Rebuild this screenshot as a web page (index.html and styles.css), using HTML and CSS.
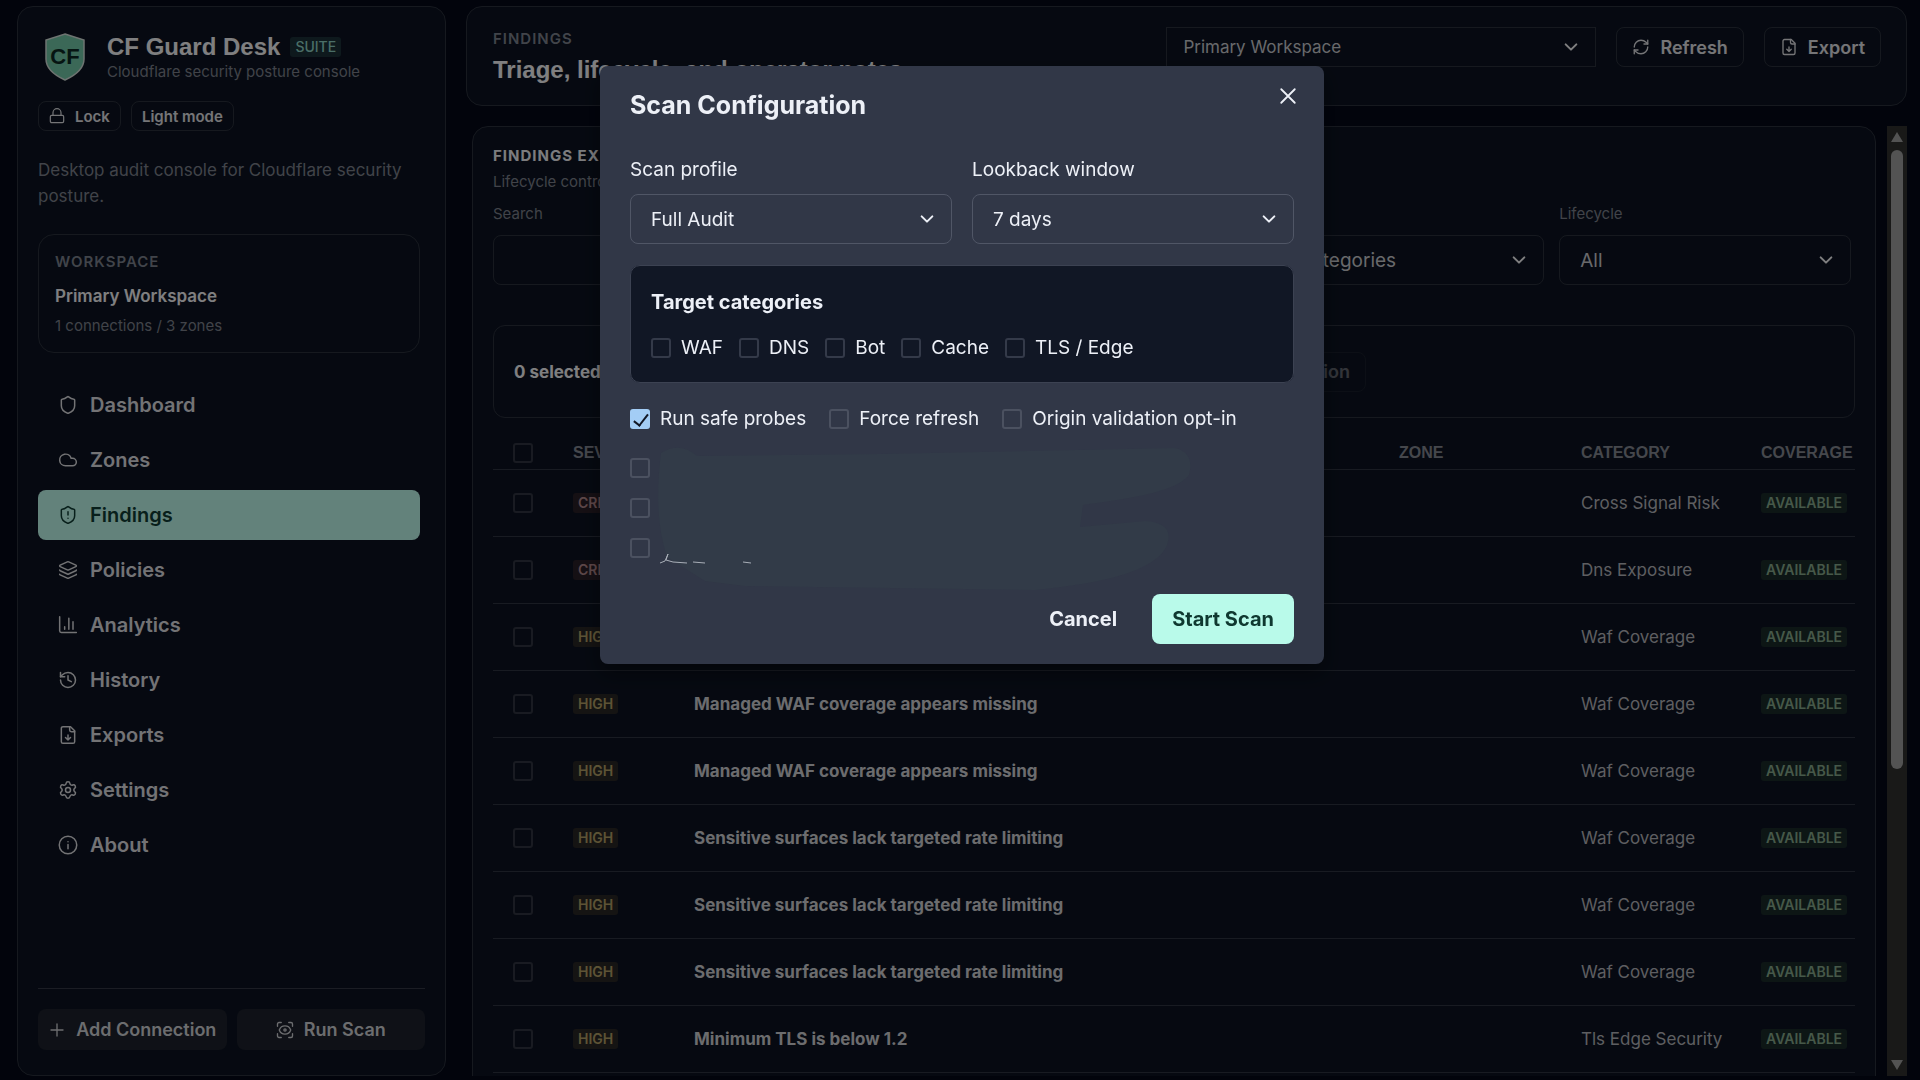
FILE: index.html
```html
<!DOCTYPE html>
<html lang="en">

<head>
    <meta charset="UTF-8">
    <meta name="viewport" content="width=device-width, initial-scale=1.0">
    <title>CF Guard Desk</title>
    <link rel="stylesheet" href="styles.css">
</head>

<body>
    <!-- icon sprite -->
    <svg class="sprite" aria-hidden="true">
        <symbol id="i-shield" viewBox="0 0 24 24"><path d="M20 13c0 5-3.500 7.500-7.660 8.950a1 1 0 0 1-.67-.01C7.500 20.500 4 18 4 13V6a1 1 0 0 1 1-1c2 0 4.500-1.200 6.240-2.720a1.170 1.170 0 0 1 1.520 0C14.510 3.810 17 5 19 5a1 1 0 0 1 1 1z"/></symbol>
        <symbol id="i-cloud" viewBox="0 0 24 24"><path d="M17.500 19H9a7 7 0 1 1 6.710-9h1.790a4.500 4.500 0 1 1 0 9z"/></symbol>
        <symbol id="i-alert" viewBox="0 0 24 24"><path d="M20 13c0 5-3.500 7.500-7.660 8.950a1 1 0 0 1-.67-.01C7.500 20.500 4 18 4 13V6a1 1 0 0 1 1-1c2 0 4.500-1.200 6.240-2.720a1.170 1.170 0 0 1 1.520 0C14.510 3.810 17 5 19 5a1 1 0 0 1 1 1z"/><path d="M12 8v4M12 16h.01"/></symbol>
        <symbol id="i-layers" viewBox="0 0 24 24"><path d="M12.830 2.180a2 2 0 0 0-1.660 0L2.600 6.080a1 1 0 0 0 0 1.830l8.580 3.910a2 2 0 0 0 1.660 0l8.580-3.900a1 1 0 0 0 0-1.830z"/><path d="M2 12a1 1 0 0 0 .58.91l8.600 3.910a2 2 0 0 0 1.650 0l8.580-3.900A1 1 0 0 0 22 12"/><path d="M2 17a1 1 0 0 0 .58.91l8.600 3.910a2 2 0 0 0 1.650 0l8.580-3.900A1 1 0 0 0 22 17"/></symbol>
        <symbol id="i-chart" viewBox="0 0 24 24"><path d="M2 2v17a2 2 0 0 0 2 2h18M18 17V8M13 17V4M8 17v-3"/></symbol>
        <symbol id="i-history" viewBox="0 0 24 24"><path d="M3 12a9 9 0 1 0 9-9 9.750 9.750 0 0 0-6.740 2.740L3 8"/><path d="M3 3v5h5M12 7v5l4 2"/></symbol>
        <symbol id="i-file" viewBox="0 0 24 24"><path d="M15 2H6a2 2 0 0 0-2 2v16a2 2 0 0 0 2 2h12a2 2 0 0 0 2-2V7z"/><path d="M14 2v4a2 2 0 0 0 2 2h4M12 18v-6M9 15l3 3 3-3"/></symbol>
        <symbol id="i-gear" viewBox="0 0 24 24"><path d="M9.671 4.136a2.340 2.340 0 0 1 4.659 0 2.340 2.340 0 0 0 3.319 1.915 2.340 2.340 0 0 1 2.330 4.033 2.340 2.340 0 0 0 0 3.831 2.340 2.340 0 0 1-2.330 4.033 2.340 2.340 0 0 0-3.319 1.915 2.340 2.340 0 0 1-4.659 0 2.340 2.340 0 0 0-3.320-1.915 2.340 2.340 0 0 1-2.330-4.033 2.340 2.340 0 0 0 0-3.831A2.340 2.340 0 0 1 6.350 6.051a2.340 2.340 0 0 0 3.319-1.915"/><circle cx="12" cy="12" r="3"/></symbol>
        <symbol id="i-info" viewBox="0 0 24 24"><circle cx="12" cy="12" r="10.500"/><path d="M12 16.500v-5M12 8h.01"/></symbol>
        <symbol id="i-plus" viewBox="0 0 24 24"><path d="M4 12h16M12 4v16"/></symbol>
        <symbol id="i-scan" viewBox="0 0 24 24"><path d="M2 7V4a2 2 0 0 1 2-2h3M17 2h3a2 2 0 0 1 2 2v3M22 17v3a2 2 0 0 1-2 2h-3M7 22H4a2 2 0 0 1-2-2v-3"/><circle cx="12" cy="12" r="1.500"/><path d="M19.500 12.330a1 1 0 0 0 0-.66 8 8 0 0 0-15 0 1 1 0 0 0 0 .66 8 8 0 0 0 15 0"/></symbol>
        <symbol id="i-refresh" viewBox="0 0 24 24"><path d="M3 12a9 9 0 0 1 9-9 9.750 9.750 0 0 1 6.740 2.740L21 8"/><path d="M21 3v5h-5M21 12a9 9 0 0 1-9 9 9.750 9.750 0 0 1-6.740-2.740L3 16"/><path d="M8 16H3v5"/></symbol>
        <symbol id="i-lock" viewBox="0 0 24 24"><rect x="2" y="11" width="20" height="11" rx="2"/><path d="M6 11V7a6 6 0 0 1 12 0v4"/></symbol>
        <symbol id="i-down" viewBox="0 0 24 24"><path d="M4 8l8 8 8-8"/></symbol>
        <symbol id="i-x" viewBox="0 0 24 24"><path d="M3 3l18 18M21 3L3 21"/></symbol>
    </svg>

    <div class="app">
        <aside class="sidebar">
            <div class="brand">
                <svg class="logo" viewBox="0 0 48 52" aria-hidden="true">
                    <path class="logo-shape" d="M24 3l19 6v19c0 9-8 16-19 21C13 44 5 37 5 28V9z"/>
                    <text x="24" y="33" text-anchor="middle">CF</text>
                </svg>
                <div>
                    <div class="brand-name">
                        <h1>CF Guard Desk</h1>
                        <span class="badge suite">SUITE</span>
                    </div>
                    <p class="small muted">Cloudflare security posture console</p>
                </div>
            </div>

            <div class="quick">
                <button class="btn tiny"><svg class="icon"><use href="#i-lock"/></svg>Lock</button>
                <button class="btn tiny">Light mode</button>
            </div>

            <p class="about muted">Desktop audit console for Cloudflare security posture.</p>

            <div class="workspace">
                <p class="eyebrow">WORKSPACE</p>
                <p class="workspace-name">Primary Workspace</p>
                <p class="small muted">1 connections / 3 zones</p>
            </div>

            <nav>
                <a href="#dashboard"><svg class="icon"><use href="#i-shield"/></svg>Dashboard</a>
                <a href="#zones"><svg class="icon"><use href="#i-cloud"/></svg>Zones</a>
                <a href="#findings" class="active"><svg class="icon"><use href="#i-alert"/></svg>Findings</a>
                <a href="#policies"><svg class="icon"><use href="#i-layers"/></svg>Policies</a>
                <a href="#analytics"><svg class="icon"><use href="#i-chart"/></svg>Analytics</a>
                <a href="#history"><svg class="icon"><use href="#i-history"/></svg>History</a>
                <a href="#exports"><svg class="icon"><use href="#i-file"/></svg>Exports</a>
                <a href="#settings"><svg class="icon"><use href="#i-gear"/></svg>Settings</a>
                <a href="#about"><svg class="icon"><use href="#i-info"/></svg>About</a>
            </nav>

            <div class="side-footer">
                <button class="btn solid"><svg class="icon"><use href="#i-plus"/></svg>Add Connection</button>
                <button class="btn solid"><svg class="icon"><use href="#i-scan"/></svg>Run Scan</button>
            </div>
        </aside>

        <main>
            <header class="topbar">
                <div>
                    <p class="eyebrow">FINDINGS</p>
                    <h2>Triage, lifecycle, and operator notes</h2>
                </div>
                <div class="top-actions">
                    <div class="select top-select">
                        <select aria-label="Workspace"><option>Primary Workspace</option></select>
                        <svg class="icon"><use href="#i-down"/></svg>
                    </div>
                    <button class="btn"><svg class="icon"><use href="#i-refresh"/></svg>Refresh</button>
                    <button class="btn"><svg class="icon"><use href="#i-file"/></svg>Export</button>
                </div>
            </header>

            <div class="scroll-area">
                <section class="panel">
                    <h3 class="eyebrow">FINDINGS EXPLORER</h3>
                    <p class="small muted">Lifecycle controls and notes</p>

                    <div class="filters">
                        <div>
                            <label for="search">Search</label>
                            <input type="text" id="search">
                        </div>
                        <div>
                            <label for="severity">Severity</label>
                            <div class="select">
                                <select id="severity"><option>All severities</option></select>
                                <svg class="icon"><use href="#i-down"/></svg>
                            </div>
                        </div>
                        <div>
                            <label for="category">Category</label>
                            <div class="select">
                                <select id="category"><option>All categories</option></select>
                                <svg class="icon"><use href="#i-down"/></svg>
                            </div>
                        </div>
                        <div>
                            <label for="lifecycle">Lifecycle</label>
                            <div class="select">
                                <select id="lifecycle"><option>All</option></select>
                                <svg class="icon"><use href="#i-down"/></svg>
                            </div>
                        </div>
                    </div>

                    <div class="bulk">
                        <strong>0 selected</strong>
                        <button class="btn" disabled>Apply action</button>
                    </div>

                    <table>
                        <thead>
                            <tr>
                                <th class="col-check"><input type="checkbox" aria-label="Select all"></th>
                                <th class="col-severity">SEVERITY</th>
                                <th>TITLE</th>
                                <th class="col-zone">ZONE</th>
                                <th class="col-category">CATEGORY</th>
                                <th class="col-coverage">COVERAGE</th>
                            </tr>
                        </thead>
                        <tbody id="rows"></tbody>
                    </table>
                </section>

                <div class="scrollbar" aria-hidden="true">
                    <span class="arrow up"></span>
                    <span class="thumb"></span>
                    <span class="arrow down"></span>
                </div>
            </div>
        </main>
    </div>

    <div class="overlay">
        <form class="modal" role="dialog" aria-labelledby="scan-title">
            <button type="button" class="close" aria-label="Close"><svg class="icon"><use href="#i-x"/></svg></button>
            <h2 id="scan-title">Scan Configuration</h2>

            <div class="fields">
                <div>
                    <label for="profile">Scan profile</label>
                    <div class="select">
                        <select id="profile"><option>Full Audit</option></select>
                        <svg class="icon"><use href="#i-down"/></svg>
                    </div>
                </div>
                <div>
                    <label for="lookback">Lookback window</label>
                    <div class="select">
                        <select id="lookback"><option>7 days</option></select>
                        <svg class="icon"><use href="#i-down"/></svg>
                    </div>
                </div>
            </div>

            <fieldset class="targets">
                <p class="targets-title">Target categories</p>
                <div class="checks">
                    <label><input type="checkbox">WAF</label>
                    <label><input type="checkbox">DNS</label>
                    <label><input type="checkbox">Bot</label>
                    <label><input type="checkbox">Cache</label>
                    <label><input type="checkbox">TLS / Edge</label>
                </div>
            </fieldset>

            <div class="checks options">
                <label><input type="checkbox" checked>Run safe probes</label>
                <label><input type="checkbox">Force refresh</label>
                <label><input type="checkbox">Origin validation opt-in</label>
            </div>

            <div class="zones">
                <div class="zone-checks">
                    <input type="checkbox" aria-label="Zone 1">
                    <input type="checkbox" aria-label="Zone 2">
                    <input type="checkbox" aria-label="Zone 3">
                </div>
                <svg class="smear" viewBox="0 0 540 146" aria-hidden="true">
                    <path class="smear-fill" d="M6 8Q25-4 42 11L225 9 520 3Q540 8 534 30C520 48 470 54 428 60L425 82 490 76Q520 78 512 100C500 130 430 140 380 145L90 141 50 136 12 112Q-2 70 6 8z"/>
                    <path class="smear-line" d="M5 118l5-2 3-7-2 6 7 2 14 1M38 117l12 1M88 117l8 1"/>
                </svg>
            </div>

            <div class="modal-footer">
                <button type="button" class="cancel">Cancel</button>
                <button type="submit" class="start">Start Scan</button>
            </div>
        </form>
    </div>

    <script>
        var findings = [
            ["CRITICAL", "Cross-signal exposure risk", "Cross Signal Risk"],
            ["CRITICAL", "DNS record exposes origin", "Dns Exposure"],
            ["HIGH", "Managed WAF coverage appears missing", "Waf Coverage"],
            ["HIGH", "Managed WAF coverage appears missing", "Waf Coverage"],
            ["HIGH", "Managed WAF coverage appears missing", "Waf Coverage"],
            ["HIGH", "Sensitive surfaces lack targeted rate limiting", "Waf Coverage"],
            ["HIGH", "Sensitive surfaces lack targeted rate limiting", "Waf Coverage"],
            ["HIGH", "Sensitive surfaces lack targeted rate limiting", "Waf Coverage"],
            ["HIGH", "Minimum TLS is below 1.2", "Tls Edge Security"]
        ];

        document.getElementById("rows").innerHTML = findings.map(function (f) {
            return '<tr>' +
                '<td class="col-check"><input type="checkbox" aria-label="Select finding"></td>' +
                '<td><span class="badge ' + f[0].toLowerCase() + '">' + f[0] + '</span></td>' +
                '<td class="title">' + f[1] + '</td>' +
                '<td></td>' +
                '<td>' + f[2] + '</td>' +
                '<td><span class="badge available">AVAILABLE</span></td>' +
                '</tr>';
        }).join("");
    </script>
</body>

</html>
```

FILE: styles.css
```css
* {
    box-sizing: border-box;
}

body {
    margin: 0;
    font-family: Inter, "Liberation Sans", sans-serif;
    font-size: 19px;
    color: #f4f4f6;
    background-color: #040818;
    overflow: hidden;
}

h1, h2, h3, p {
    margin: 0;
}

h1, .topbar h2 {
    font-family: "Liberation Sans", Arial, sans-serif;
    font-size: 24px;
    line-height: 30px;
    font-weight: 700;
}

button, input, select {
    font: inherit;
    color: inherit;
}

button {
    cursor: pointer;
}

.sprite {
    position: absolute;
    width: 0;
    height: 0;
}

.icon {
    width: 20px;
    height: 20px;
    flex: none;
    fill: none;
    stroke: currentColor;
    stroke-width: 1.8;
    stroke-linecap: round;
    stroke-linejoin: round;
}

.muted {
    color: #7d818c;
}

.small {
    font-size: 15px;
    line-height: 20px;
}

.eyebrow {
    font-size: 15px;
    line-height: 20px;
    font-weight: 600;
    letter-spacing: 1px;
    color: #7d828e;
}

.app {
    display: flex;
    gap: 20px;
    height: 100vh;
    padding: 6px 13px 4px 17px;
}

/* sidebar */
.sidebar {
    display: flex;
    flex-direction: column;
    width: 429px;
    flex: none;
    padding: 24px 20px 25px;
    border: 1px solid #2b303c;
    border-radius: 16px;
    background-color: #0c1321;
}

.brand {
    display: flex;
    align-items: center;
    gap: 18px;
    padding-left: 3px;
}

.logo {
    width: 48px;
    height: 52px;
}

.logo-shape {
    fill: #71c7a8;
    stroke: #d3ded9;
    stroke-width: 1.5;
}

.logo text {
    font: 700 22px "Liberation Sans", sans-serif;
    fill: #0c2a24;
}

.brand-name {
    display: flex;
    align-items: center;
    gap: 10px;
}

.badge {
    display: inline-block;
    padding: 0 5px;
    border-radius: 3px;
    font-size: 14px;
    line-height: 20px;
    font-weight: 600;
}

.suite {
    color: #8fd3c5;
    background-color: #1b3038;
    font-weight: 500;
}

.quick {
    display: flex;
    gap: 10px;
    margin: 18px 0 26px;
}

.btn {
    display: flex;
    align-items: center;
    justify-content: center;
    gap: 10px;
    height: 40px;
    padding: 0 15px;
    border: 1px solid #2b303c;
    border-radius: 8px;
    background: none;
    font-size: 18px;
    font-weight: 600;
    color: #e0e0e4;
}

.btn .icon {
    width: 18px;
    height: 18px;
}

.btn.tiny {
    height: 30px;
    padding: 0 10px;
    font-size: 15px;
}

.btn.tiny .icon {
    width: 16px;
    height: 16px;
}

.btn.solid {
    height: 41px;
    padding: 0 10px;
    background-color: #1d212c;
    border: none;
    color: #d0d1d5;
}

.about {
    margin-bottom: 25px;
    font-size: 17px;
    line-height: 26px;
}

.workspace {
    margin-right: 5px;
    padding: 17px 16px 16px;
    border: 1px solid #2b303c;
    border-radius: 16px;
}

.workspace-name {
    margin: 13px 0 9px;
    font-size: 17px;
    line-height: 22px;
    font-weight: 600;
}

nav {
    display: flex;
    flex-direction: column;
    gap: 5px;
    margin: 27px 5px 0 0;
}

nav a {
    display: flex;
    align-items: center;
    gap: 12px;
    height: 50px;
    padding: 0 20px;
    border-radius: 8px;
    font-size: 20px;
    font-weight: 600;
    color: #dcdce0;
    text-decoration: none;
}

nav a.active {
    background-color: #bffaec;
    color: #103c34;
}

.side-footer {
    display: grid;
    grid-template-columns: 1fr 1fr;
    gap: 10px;
    margin-top: auto;
    padding-top: 20px;
    border-top: 1px solid #343945;
}

/* main column */
main {
    display: flex;
    flex-direction: column;
    flex: 1;
    gap: 20px;
    min-width: 0;
}

.topbar {
    display: flex;
    justify-content: space-between;
    padding: 20px 25px 20px 26px;
    border: 1px solid #2b303c;
    border-radius: 16px;
    background-color: #0c1321;
}

.topbar .eyebrow {
    margin: 2px 0 6px;
}

.top-actions {
    display: flex;
    align-items: flex-start;
    gap: 20px;
}

.select {
    position: relative;
}

.select select,
input[type="text"] {
    display: block;
    width: 100%;
    height: 50px;
    padding: 0 20px;
    border: 1px solid #2b303c;
    border-radius: 8px;
    background: none;
    appearance: none;
}

.select .icon {
    position: absolute;
    right: 17px;
    top: 50%;
    width: 16px;
    height: 16px;
    margin-top: -8px;
    stroke-width: 3;
    pointer-events: none;
}

.top-select {
    width: 430px;
}

.top-select select {
    height: 40px;
    padding: 0 16px;
    border-radius: 0;
    font-size: 17px;
    color: #c8c9ce;
}

.scroll-area {
    display: flex;
    flex: 1;
    gap: 11px;
    min-height: 0;
    padding-left: 6px;
    overflow: hidden;
}

.panel {
    flex: 1;
    height: max-content;
    padding: 19px 20px;
    border: 1px solid #2b303c;
    border-radius: 16px 16px 0 0;
    background-color: #0c1321;
}

.panel h3 {
    margin-bottom: 6px;
    font-weight: 700;
    color: #eeeef2;
}

.filters {
    display: grid;
    grid-template-columns: 3fr 2fr 2fr 2fr;
    gap: 15px;
    margin: 12px 4px 40px 0;
}

.filters label {
    display: block;
    margin-bottom: 11px;
    font-size: 15px;
    line-height: 20px;
    color: #7d818c;
}

.filters select {
    color: #c8c9ce;
}

.bulk {
    display: flex;
    align-items: center;
    justify-content: space-between;
    height: 93px;
    padding: 0 488px 0 20px;
    border: 1px solid #2b303c;
    border-radius: 12px;
    font-size: 17px;
}

.bulk strong {
    font-weight: 700;
}

.btn:disabled {
    opacity: 0.4;
}

table {
    width: 100%;
    margin-top: 17px;
    border-collapse: collapse;
    table-layout: fixed;
    font-size: 17px;
}

th, td {
    padding: 0;
    border-bottom: 1px solid #2f3441;
    text-align: left;
    white-space: nowrap;
}

th {
    height: 34px;
    padding-top: 3px;
    font-family: "Liberation Sans", Arial, sans-serif;
    font-size: 16px;
    font-weight: 700;
    color: #858893;
}

td {
    height: 67px;
    color: #b4b5bb;
}

.title {
    font-weight: 700;
    color: #cfd0d4;
}

th.col-check, td.col-check {
    width: 80px;
    padding-left: 20px;
}

.col-severity {
    width: 121px;
}

.col-zone {
    width: 182px;
}

.col-category {
    width: 180px;
}

.col-coverage {
    width: 94px;
}

.critical {
    color: #b3888c;
    background-color: #2a1f27;
}

.high {
    color: #b3a067;
    background-color: #2a2725;
}

.available {
    color: #86a98c;
    background-color: #1a2b2a;
}

input[type="checkbox"] {
    display: block;
    flex: none;
    width: 20px;
    height: 20px;
    margin: 0;
    border: 2px solid #303541;
    border-radius: 3px;
    appearance: none;
}

.scrollbar {
    display: flex;
    flex-direction: column;
    align-items: center;
    width: 20px;
    padding: 6px 0;
    background-color: #30312f;
}

.thumb {
    width: 12px;
    height: 66%;
    margin: 8px 0 auto;
    border-radius: 6px;
    background-color: #9f9f9f;
}

.arrow {
    border: 6px solid transparent;
}

.arrow.up {
    border-top: 0;
    border-bottom: 10px solid #9f9f9f;
}

.arrow.down {
    border-bottom: 0;
    border-top: 10px solid #9f9f9f;
}

/* scan dialog */
.overlay {
    position: fixed;
    inset: 0;
    padding: 66px 0 0 4px;
    background-color: rgba(0, 0, 0, 0.48);
}

.modal {
    position: relative;
    max-width: 724px;
    margin: 0 auto;
    padding: 24px 30px 20px;
    border-radius: 8px;
    background-color: #313747;
    color: #edf0f7;
    box-shadow: 0 10px 20px rgba(0, 0, 0, 0.4);
}

.modal h2 {
    font-size: 25px;
    line-height: 30px;
    font-weight: 700;
}

.close {
    position: absolute;
    top: 14px;
    right: 20px;
    display: flex;
    padding: 7px;
    border: none;
    background: none;
}

.close .icon {
    width: 18px;
    height: 18px;
    stroke-width: 2.4;
}

.fields {
    display: grid;
    grid-template-columns: 1fr 1fr;
    gap: 20px;
    margin: 36px 0 21px;
}

.fields label {
    display: block;
    margin-bottom: 10px;
    line-height: 28px;
}

.modal select {
    border-color: #505666;
}

.targets {
    margin: 0;
    padding: 21px 20px 20px;
    border: 1px solid #3c4252;
    border-radius: 10px;
    background-color: #111725;
}

.targets-title {
    margin-bottom: 17px;
    font-size: 20px;
    line-height: 30px;
    font-weight: 700;
}

.checks {
    display: flex;
    gap: 16px;
}

.checks label {
    display: flex;
    align-items: center;
    gap: 10px;
    line-height: 28px;
}

.options {
    gap: 23px;
    margin: 22px 0 12px;
}

.targets input[type="checkbox"] {
    border-color: #343a49;
}

.options input[type="checkbox"],
.zones input[type="checkbox"] {
    border-color: #4b5160;
}

.options input[type="checkbox"]:checked {
    border: none;
    background-color: #a3cdf5;
}

/* tick drawn as two borders of a turned box */
input[type="checkbox"]:checked::before {
    content: "";
    display: block;
    width: 6px;
    height: 13px;
    margin: 2px 0 0 7px;
    border: solid #111725;
    border-width: 0 2px 2px 0;
    transform: rotate(38deg);
}

.zones {
    display: flex;
    gap: 5px;
    height: 149px;
}

.zone-checks {
    display: flex;
    flex-direction: column;
    gap: 20px;
    padding-top: 13px;
}

.smear {
    width: 540px;
    height: 146px;
}

.smear-fill {
    fill: #323b48;
}

.smear-line {
    fill: none;
    stroke: #a9afb8;
    stroke-width: 1;
}

.modal-footer {
    display: flex;
    justify-content: flex-end;
    gap: 15px;
}

.modal-footer button {
    height: 50px;
    padding: 0 20px;
    border: none;
    border-radius: 8px;
    background: none;
    font-size: 20px;
    font-weight: 700;
}

.modal-footer .start {
    background-color: #b9faea;
    color: #0f3830;
}
```
